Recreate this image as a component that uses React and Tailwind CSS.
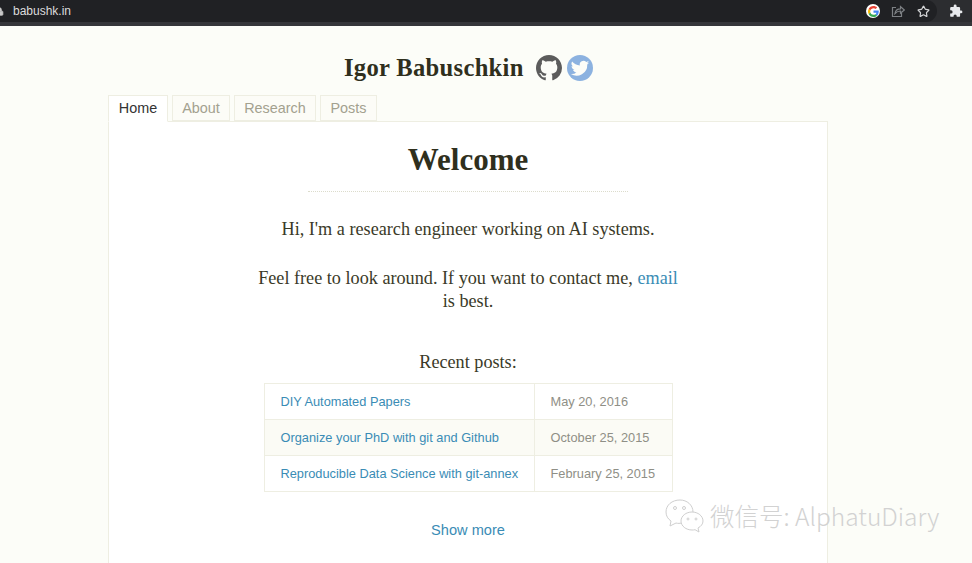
import { Star, Lock } from 'lucide-react'

const posts = [
  { title: 'DIY Automated Papers', date: 'May 20, 2016' },
  { title: 'Organize your PhD with git and Github', date: 'October 25, 2015' },
  { title: 'Reproducible Data Science with git-annex', date: 'February 25, 2015' },
]

const serif = "font-['Liberation_Serif',serif]"
const sans = "font-['Liberation_Sans',sans-serif]"

function GoogleIcon() {
  return (
    <div className="w-[14px] h-[14px] rounded-full bg-white flex items-center justify-center">
      <svg viewBox="0 0 48 48" className="w-[11px] h-[11px]">
        <path fill="#EA4335" d="M24 9.500c3.500 0 6.700 1.300 9.100 3.500l6.800-6.800C35.800 2.400 30.300 0 24 0 14.600 0 6.500 5.400 2.600 13.200l7.900 6.200C12.400 13.600 17.700 9.500 24 9.500z" />
        <path fill="#4285F4" d="M46.900 24.500c0-1.600-.1-3.100-.4-4.500H24v9h12.900c-.6 3-2.200 5.500-4.800 7.200l7.700 6c4.500-4.200 7.100-10.300 7.100-17.700z" />
        <path fill="#FBBC05" d="M10.500 28.600c-.5-1.400-.8-3-.8-4.600s.3-3.200.8-4.600l-7.900-6.200C.9 16.500 0 20.100 0 24s.9 7.500 2.600 10.800l7.900-6.200z" />
        <path fill="#34A853" d="M24 48c6.500 0 11.900-2.100 15.900-5.800l-7.700-6c-2.200 1.400-4.900 2.300-8.200 2.300-6.300 0-11.600-4.100-13.500-9.900l-7.900 6.200C6.500 42.600 14.600 48 24 48z" />
      </svg>
    </div>
  )
}

function ShareIcon() {
  return (
    <svg viewBox="0 0 14 14" className="w-[14px] h-[14px]" fill="none" stroke="#7d8084" strokeWidth="1.200">
      <path d="M5 3.500H1.500v9h9V9" />
      <path d="M4 9.500c.4-3 2.600-4.600 5.500-4.600V2.500L13.300 6 9.500 9.300V7C7.300 7 5.600 7.800 4 9.500z" />
    </svg>
  )
}

function PuzzleIcon() {
  return (
    <svg viewBox="0 0 24 24" className="w-[14px] h-[14px]" fill="#e8eaed">
      <path d="M20.500 11H19V7a2 2 0 0 0-2-2h-4V3.500a2.500 2.500 0 0 0-5 0V5H4a2 2 0 0 0-2 2v3.800h1.500a2.700 2.700 0 0 1 0 5.400H2V20a2 2 0 0 0 2 2h3.800v-1.500a2.700 2.700 0 0 1 5.400 0V22H17a2 2 0 0 0 2-2v-4h1.500a2.500 2.500 0 0 0 0-5z" />
    </svg>
  )
}

function GithubIcon() {
  return (
    <svg viewBox="0 0 16 16" className="w-[26px] h-[26px]" fill="#5c5c5c">
      <path d="M8 0C3.580 0 0 3.580 0 8c0 3.540 2.290 6.530 5.470 7.590.4.070.55-.17.55-.38 0-.19-.01-.82-.01-1.490-2.010.37-2.530-.49-2.690-.94-.09-.23-.48-.94-.82-1.130-.28-.15-.68-.52-.01-.53.63-.01 1.080.58 1.230.82.72 1.210 1.870.87 2.330.66.070-.52.28-.87.51-1.070-1.780-.2-3.640-.89-3.640-3.950 0-.87.31-1.590.82-2.150-.08-.2-.36-1.020.08-2.120 0 0 .67-.21 2.200.82.64-.18 1.320-.27 2-.27s1.360.09 2 .27c1.530-1.040 2.200-.82 2.200-.82.44 1.100.16 1.920.08 2.120.51.56.82 1.270.82 2.150 0 3.070-1.870 3.750-3.650 3.950.29.25.54.73.54 1.480 0 1.070-.01 1.930-.01 2.200 0 .21.15.46.55.38A8.010 8.010 0 0 0 16 8c0-4.420-3.580-8-8-8z" />
    </svg>
  )
}

function TwitterIcon() {
  return (
    <div className="w-[26px] h-[26px] rounded-full bg-[#8cb2e0] flex items-center justify-center">
      <svg viewBox="0 0 24 24" className="w-[20px] h-[20px]" fill="#fdfdf8">
        <path d="M23 5.500c-.8.400-1.700.6-2.600.7.900-.6 1.600-1.400 2-2.500-.9.500-1.800.9-2.900 1.100a4.500 4.500 0 0 0-7.700 4.100C8.100 8.700 4.800 6.900 2.500 4.200a4.500 4.500 0 0 0 1.400 6c-.7 0-1.400-.2-2-.6 0 2.200 1.500 4.100 3.600 4.500-.7.200-1.400.2-2 .1.600 1.800 2.200 3.100 4.200 3.100A9 9 0 0 1 1 19.200 12.800 12.800 0 0 0 20.700 7.800c.9-.6 1.700-1.400 2.300-2.300z" />
      </svg>
    </div>
  )
}

function Tab({ label, active, width }) {
  return (
    <div
      style={{ width }}
      className={
        active
          ? `${sans} h-[27px] -mb-px z-10 bg-white border border-[#eeeee2] border-b-white text-[14.400px] text-[#333] flex items-center justify-center`
          : `${sans} h-[26px] pt-px bg-[#fcfcf7] border border-[#eeeee2] text-[14.400px] text-[#a3a18f] flex items-center justify-center`
      }
    >
      {label}
    </div>
  )
}

export default function App() {
  return (
    <div className="relative w-[972px] h-[563px] overflow-hidden bg-[#fcfdf8]">
      {/* browser bar */}
      <div className="h-[26px] bg-[#35363a]">
        <div className="h-[22px] bg-[#2c2d30] flex items-center">
          <div className="w-[937px] h-[22px] bg-[#202124] rounded-r-full flex items-center">
            <Lock size={9} fill="#c8c8c8" className="-ml-[5px] text-[#c8c8c8]" />
            <span className={`${sans} ml-[9px] text-[12px] text-[#dcdcdc]`}>babushk.in</span>
            <div className="ml-auto flex items-center">
              <GoogleIcon />
              <div className="ml-[11px]"><ShareIcon /></div>
              <Star size={13} strokeWidth={2.200} className="ml-[12px] mr-[7px] text-[#d5d6d8]" />
            </div>
          </div>
          <div className="ml-[12px]"><PuzzleIcon /></div>
        </div>
      </div>

      {/* title */}
      <div className="h-[69px] pl-[344px] pt-[28px] flex items-start">
        <h1 className={`${serif} text-[24.600px] leading-[28px] font-bold text-[#2f2f1d] tracking-[0.3px]`}>Igor Babuschkin</h1>
        <div className="ml-[12px] mt-[1px] flex gap-[5px]">
          <GithubIcon />
          <TwitterIcon />
        </div>
      </div>

      {/* tabs */}
      <div className="ml-[108px] w-[720px] flex items-end gap-[4px]">
        <Tab label="Home" active width={60} />
        <Tab label="About" width={58} />
        <Tab label="Research" width={82} />
        <Tab label="Posts" width={57} />
      </div>

      {/* panel */}
      <div className="ml-[108px] w-[720px] h-[500px] bg-white border border-[#eeeee2] flex flex-col items-center">
        <h2 className={`${serif} mt-[20px] text-[31px] leading-[36px] font-bold text-[#2f2f1d]`}>Welcome</h2>
        <div className="mt-[13px] w-[320px] border-t border-dotted border-[#dcdccc]" />
        <p className={`${serif} mt-[26px] text-[18.200px] leading-[23px] text-[#3a3a28]`}>Hi, I'm a research engineer working on AI systems.</p>
        <p className={`${serif} mt-[26px] w-[430px] text-center text-[18.200px] leading-[23px] text-[#3a3a28]`}>
          Feel free to look around. If you want to contact me, <span className="text-[#3a8cb5]">email</span> is best.
        </p>
        <p className={`${serif} mt-[38px] text-[18.200px] leading-[23px] text-[#3a3a28]`}>Recent posts:</p>

        <table className={`${sans} mt-[9px] w-[409px] table-fixed border-collapse border border-[#eeeee2] text-[12.800px]`}>
          <tbody>
            {posts.map((p, i) => (
              <tr key={p.title} className={`h-[36px] ${i === 1 ? 'bg-[#fbfbf5]' : 'bg-white'}`}>
                <td className="w-[270px] pl-[16px] border border-[#eeeee2] text-[#3a8cb5] whitespace-nowrap">{p.title}</td>
                <td className="pl-[16px] border border-[#eeeee2] text-[#8f8f86] whitespace-nowrap">{p.date}</td>
              </tr>
            ))}
          </tbody>
        </table>

        <span className={`${sans} mt-[28px] text-[14.600px] text-[#3a8cb5]`}>Show more</span>
      </div>

      {/* watermark */}
      <div className="absolute left-[664px] top-[498px] flex items-center">
        <svg viewBox="0 0 42 36" className="w-[42px] h-[36px]" fill="#ffffff" stroke="#cfcfcf" strokeWidth="1">
          <path d="M16 2C8 2 2 7 2 14c0 4 2 7 5 9l-1 5 6-3c1 .3 2 .4 3 .4C23 25 29 20 29 14 29 7 23 2 16 2z" />
          <path d="M28 14c-6 0-11 4-11 9s5 9 11 9c1 0 2 0 3-.3l4 2.300-1-4c3-1.600 5-4 5-7 0-5-5-9-11-9z" />
          <circle cx="11" cy="10" r="1.500" />
          <circle cx="20" cy="10" r="1.500" />
          <circle cx="24" cy="21" r="1" />
          <circle cx="32" cy="21" r="1" />
        </svg>
        <span className="ml-[4px] font-['Noto_Sans_CJK_SC','Liberation_Sans',sans-serif] text-[24.500px] text-[#d2d2d2] font-light whitespace-nowrap">微信号: AlphatuDiary</span>
      </div>
    </div>
  )
}
